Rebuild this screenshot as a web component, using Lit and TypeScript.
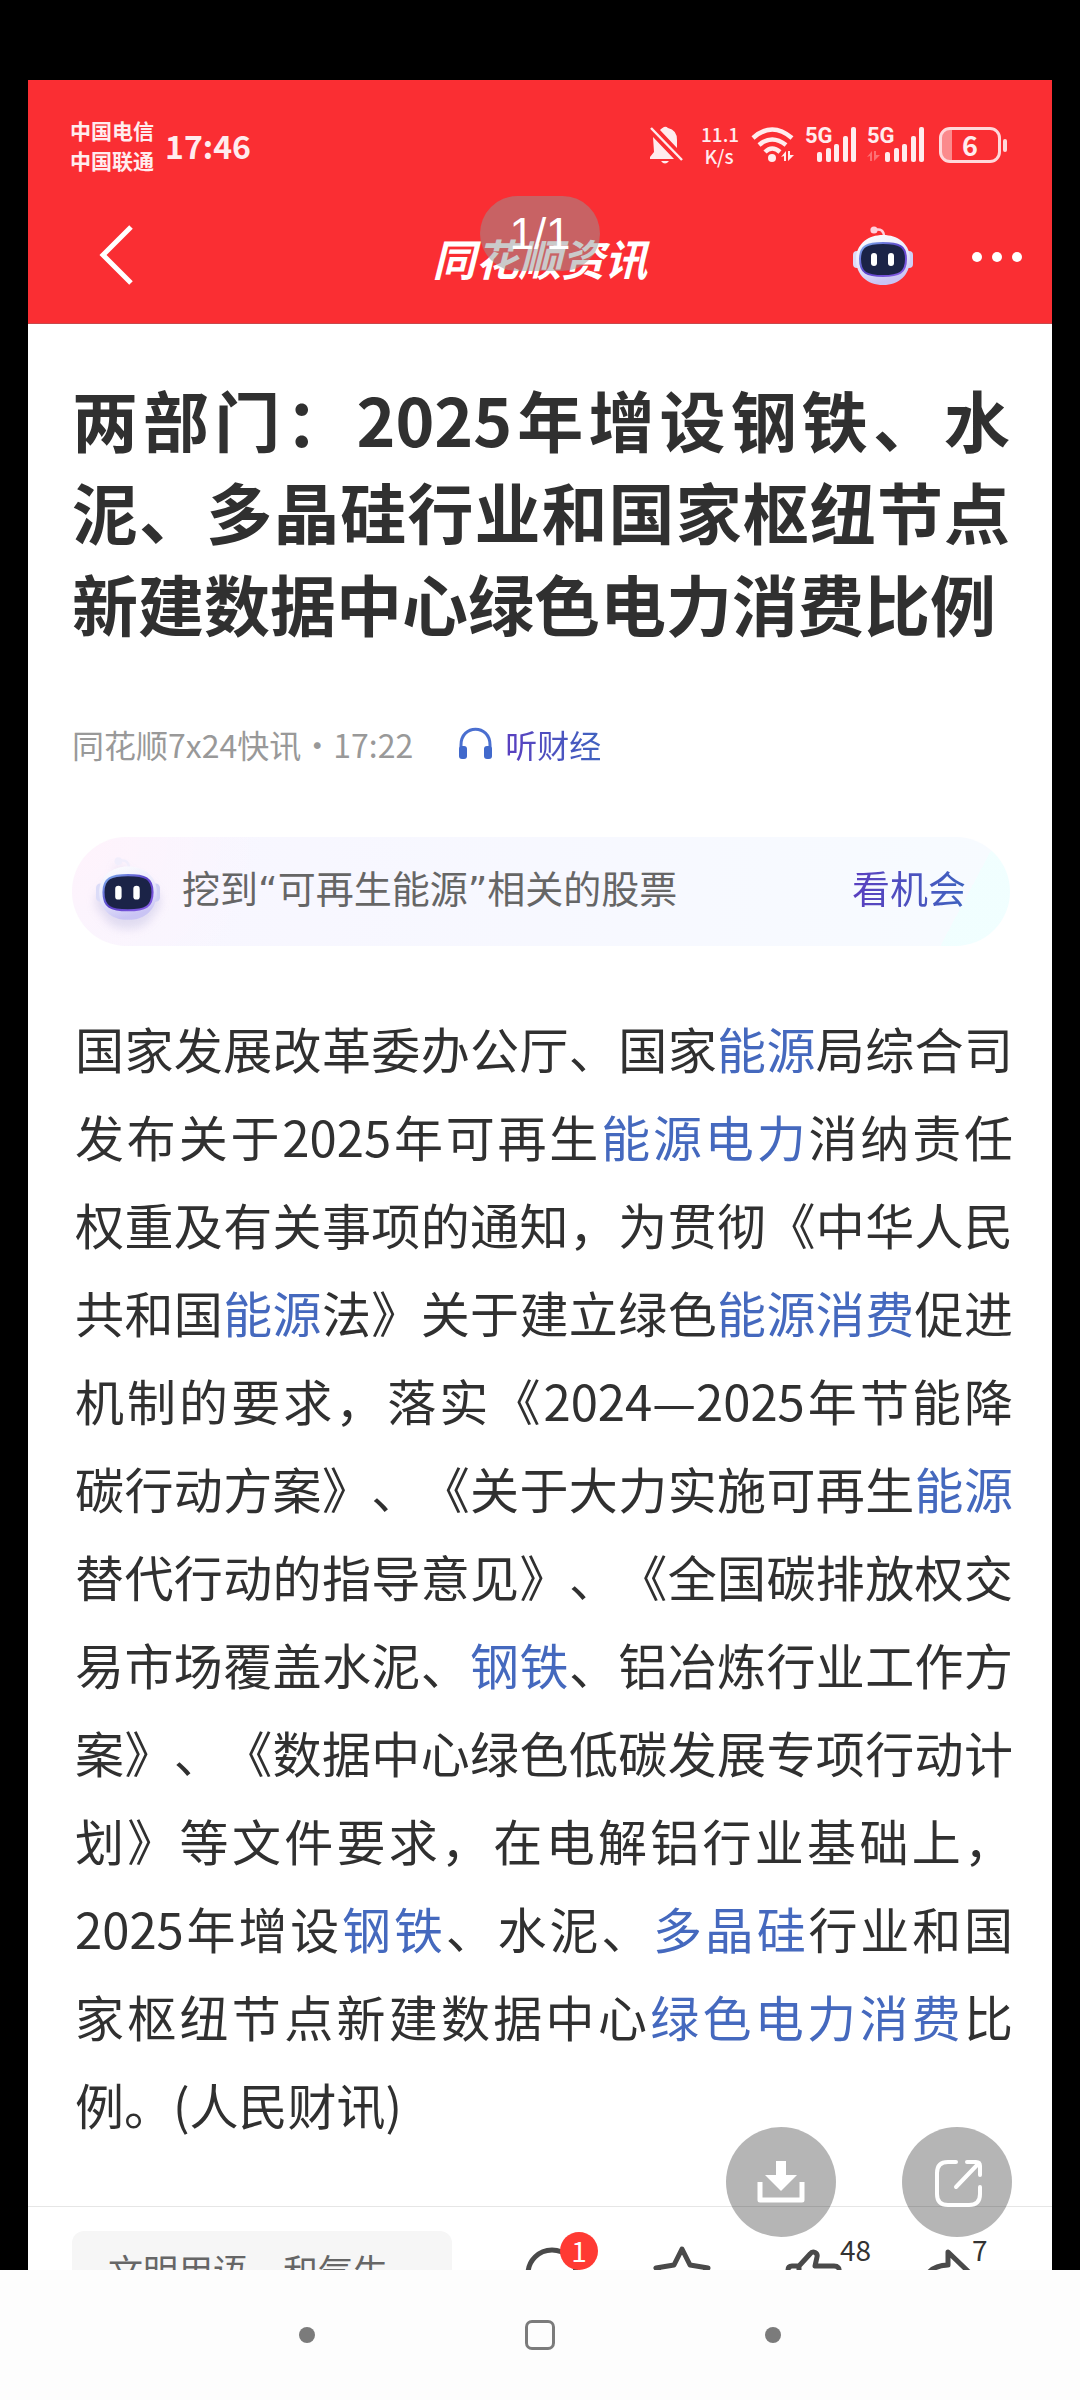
import { LitElement, html, css, svg, TemplateResult } from "lit";
import { customElement } from "lit/decorators.js";

type Piece = string | { term: string };

const HEADLINE = "两部门：2025年增设钢铁、水泥、多晶硅行业和国家枢纽节点新建数据中心绿色电力消费比例";

const BODY: Piece[] = [
  "国家发展改革委办公厅、国家", { term: "能源" }, "局综合司发布关于2025年可再生", { term: "能源电力" },
  "消纳责任权重及有关事项的通知，为贯彻《中华人民共和国", { term: "能源" }, "法》关于建立绿色", { term: "能源消费" },
  "促进机制的要求，落实《2024—2025年节能降碳行动方案》、《关于大力实施可再生", { term: "能源" },
  "替代行动的指导意见》、《全国碳排放权交易市场覆盖水泥、", { term: "钢铁" },
  "、铝冶炼行业工作方案》、《数据中心绿色低碳发展专项行动计划》等文件要求，在电解铝行业基础上，2025年增设",
  { term: "钢铁" }, "、水泥、", { term: "多晶硅" }, "行业和国家枢纽节点新建数据中心", { term: "绿色电力消费" }, "比例。(人民财讯)",
];

const robot = (id: string, antenna: string): TemplateResult => html`
  <svg class="robot" viewBox="0 2 62 60" aria-hidden="true">
    <defs>
      <linearGradient id="${id}-shell" x1="0" y1="0" x2="0.3" y2="1">
        <stop offset="0" stop-color="#ffffff"></stop>
        <stop offset="0.6" stop-color="#e6e6fb"></stop>
        <stop offset="1" stop-color="#c9c4f4"></stop>
      </linearGradient>
      <linearGradient id="${id}-rim" x1="0" y1="0" x2="1" y2="1">
        <stop offset="0" stop-color="#7fb4ee"></stop>
        <stop offset="0.5" stop-color="#5a3fc8"></stop>
        <stop offset="1" stop-color="#8a62e8"></stop>
      </linearGradient>
    </defs>
    <path d="M22 5C29 3 32 6 32 12" fill="none" stroke=${antenna} stroke-width="2.5"></path>
    <circle cx="22" cy="5" r="3.6" fill=${antenna}></circle>
    <rect x="1" y="26" width="9" height="17" rx="4" fill="#dcdcf8"></rect>
    <rect x="52" y="26" width="9" height="17" rx="4" fill="#cfd0f5"></rect>
    <path d="M31 10C47 10 58 20 58 34C58 50 47 60 31 60C15 60 4 50 4 34C4 20 15 10 31 10Z" fill="url(#${id}-shell)"></path>
    <path d="M31 18C47 18 54 21 54 34C54 48 47 51 31 51C15 51 8 48 8 34C8 21 15 18 31 18Z" fill="#1b2347" stroke="url(#${id}-rim)" stroke-width="2"></path>
    <rect x="19" y="28" width="6" height="13" rx="3" fill="#fff"></rect>
    <rect x="36" y="28" width="6" height="13" rx="3" fill="#fff"></rect>
  </svg>`;

const bars = (x: number) => svg`
  <rect x=${x} y="25" width="5" height="10" rx="2"></rect>
  <rect x=${x + 9} y="21" width="5" height="14" rx="2"></rect>
  <rect x=${x + 17} y="17" width="5" height="18" rx="2"></rect>
  <rect x=${x + 26} y="9" width="5" height="26" rx="2"></rect>
  <rect x=${x + 34} y="0" width="5" height="35" rx="2"></rect>`;

const arrows = svg`<path d="M0 6L5 0V10H3V5ZM7 0V10L13 4H9V0Z"></path>`;

@customElement("app-root")
export class AppRoot extends LitElement {
  static styles = css`
    :host {
      display: flex;
      flex-direction: column;
      height: 100vh;
      background: #000;
      color: #303030;
      font-family: "Noto Sans CJK SC", sans-serif;
      text-spacing-trim: space-all;
      text-autospace: no-autospace;
    }
    * { box-sizing: border-box; }
    button { border: 0; padding: 0; background: none; font: inherit; color: inherit; }
    a { color: inherit; text-decoration: none; }
    svg { display: block; overflow: visible; }
    h1, p { margin: 0; }

    .screen {
      position: relative;
      flex: 1 1 0;
      min-height: 0;
      margin: 80px 28px 0;
      overflow: hidden;
      background: #fff;
    }
    .top { background: #fa2e33; color: #fff; padding-bottom: 20px; border-bottom: 1px solid #c8484c; }
    .status {
      display: flex;
      align-items: center;
      height: 130px;
      padding: 0 45px 0 42px;
      color: #ffecee;
    }
    .carriers { font-size: 21px; line-height: 30px; font-weight: 700; }
    .clock { margin-left: 11px; font-size: 32px; line-height: 40px; font-weight: 700; }
    .signals { display: flex; align-items: center; margin-left: auto; }
    .bell { width: 34px; height: 38px; }
    .speed { margin-left: 18px; width: 36px; text-align: center; font-size: 19px; line-height: 22px; font-weight: 500; }
    .wifi { margin-left: 14px; width: 44px; height: 36px; }
    .cell { position: relative; margin-left: 10px; width: 52px; height: 36px; }
    .cell.second { width: 58px; }
    .gen { position: absolute; left: 0; top: -2px; font: 700 22px/22px "Liberation Sans Narrow", Roboto, sans-serif; }
    .cell svg, .wifi, .bell { fill: currentColor; }
    .battery { display: flex; align-items: center; gap: 2px; margin-left: 14px; }
    .case {
      width: 62px; height: 36px; border: 3px solid #ffd8da; border-radius: 11px;
      display: grid; place-items: center; font-size: 27px; line-height: 28px; font-weight: 700;
      background: linear-gradient(90deg, #fb8a8c 10px, transparent 10px);
    }
    .nub { width: 4px; height: 13px; border-radius: 3px; background: #ffd8da; }

    .bar { display: grid; grid-template-columns: 1fr auto 1fr; align-items: center; height: 93px; padding: 0 30px; }
    .back { width: 48px; height: 64px; margin-left: 34px; }
    .brand { font-size: 43px; line-height: 56px; font-weight: 700; font-style: italic; }
    .actions { display: flex; justify-content: flex-end; align-items: center; gap: 58px; }
    .bot, .bot .robot { width: 62px; height: 60px; }
    .more { display: flex; gap: 10px; padding: 16px 0; }
    .more i { width: 10px; height: 10px; border-radius: 50%; background: #fff; }

    .counter {
      position: absolute; top: 116px; left: 50%; transform: translateX(-50%);
      width: 120px; height: 75px; border-radius: 38px; background: rgba(150, 150, 150, 0.5);
      color: #fff; text-align: center; font: 400 44px/75px "Liberation Sans", sans-serif;
    }

    .article { padding: 48px 42px 58px 44px; }
    .headline { font-size: 66px; line-height: 92px; font-weight: 700; text-align: justify; }
    .meta { display: flex; align-items: center; margin-top: 72px; height: 48px; font-size: 32px; line-height: 48px; color: #999; }
    .listen { display: flex; align-items: center; gap: 11px; margin-left: 44px; }
    .listen svg { width: 37px; height: 34px; }
    .grad { background: linear-gradient(90deg, #5a3fc0, #3f63bf); background-clip: text; -webkit-background-clip: text; color: transparent; }
    .promo {
      display: flex; align-items: center; height: 109px; margin-top: 69px; padding: 0 44px 4px 22px; border-radius: 55px;
      font-family: "DejaVu Sans", "Noto Sans CJK SC", sans-serif; font-size: 38px; line-height: 56px; color: #666;
      background:
        linear-gradient(118deg, transparent 93%, rgba(240, 255, 255, 0.9) 93%),
        radial-gradient(circle at 0 0, #fff3fc, rgba(255, 243, 252, 0) 190px),
        linear-gradient(90deg, #f8f6ff, #f7f8ff 50%, #f7fbff);
    }
    .promo .robot { width: 68px; height: 64px; filter: drop-shadow(0 9px 5px rgba(120, 120, 190, 0.2)); }
    .promo .label { margin-left: 20px; }
    .promo .go { margin-left: auto; }
    .body { margin: 58px -3px 0 3px; font-size: 49px; line-height: 88px; text-align: justify; }
    .body a { color: #4569be; }

    .tools { display: flex; gap: 34px; padding: 24px 38px 24px 44px; border-top: 1px solid #e6e6e6; }
    .comment {
      flex: 1; min-width: 0; height: 78px; border: 0; border-radius: 12px; background: #f6f6f6;
      padding: 0 36px; font: 400 35px/78px "Noto Sans CJK SC", sans-serif; color: #666;
    }
    .comment::placeholder { color: #666; opacity: 1; }
    .acts { display: grid; grid-template-columns: repeat(4, 132px); }
    .act { position: relative; display: flex; justify-content: center; padding-top: 14px; }
    .act svg { width: 60px; height: 60px; fill: none; stroke: #4a4a4a; stroke-width: 5; stroke-linejoin: round; stroke-linecap: round; }
    .num { position: absolute; left: 90px; top: 4px; font-size: 28px; line-height: 28px; color: #333; }
    .badge {
      position: absolute; left: 74px; top: 1px; width: 38px; height: 38px; border-radius: 50%;
      background: #ff3a33; color: #fff; font-size: 28px; line-height: 36px; text-align: center;
    }

    .floats { position: absolute; right: 40px; bottom: 33px; display: flex; gap: 66px; }
    .fab { width: 110px; height: 110px; border-radius: 50%; background: rgba(0, 0, 0, 0.29); }
    .fab svg { width: 110px; height: 110px; }

    .system { display: flex; align-items: center; justify-content: center; gap: 210px; height: 130px; background: #fdfdfd; }
    .dot { width: 16px; height: 16px; border-radius: 50%; background: #7b7b7b; }
    .home { width: 30px; height: 30px; border: 3px solid #7b7b7b; border-radius: 7px; }
  `;

  render() {
    return html`
      <div class="screen">
        <header class="top">
          <div class="status">
            <div class="carriers"><div>中国电信</div><div>中国联通</div></div>
            <time class="clock">17:46</time>
            <div class="signals">
              <svg class="bell" viewBox="0 0 34 38" aria-hidden="true">
                <path d="M15 1Q17 0 19 2Q28 4 28 14V22L11 4Q13 2 15 1ZM4 11L25 33H1V31L5 26ZM12 35H20Q16 40 12 35Z"></path>
                <path d="M2 2L33 34" stroke="currentColor" stroke-width="2.5"></path>
              </svg>
              <div class="speed"><div>11.1</div><div>K/s</div></div>
              <svg class="wifi" viewBox="0 0 44 36" aria-hidden="true">
                <g fill="none" stroke="currentColor" stroke-width="4.5">
                  <path d="M2 11Q21 -6 41 11"></path><path d="M8 18Q21 7 35 18"></path><path d="M14 25Q21 18 29 25"></path>
                </g>
                <circle cx="21" cy="31" r="4"></circle>
                <g transform="translate(30 24)">${arrows}</g>
              </svg>
              <div class="cell">
                <span class="gen">5G</span>
                <svg width="52" height="36" viewBox="0 0 52 36" aria-hidden="true">${bars(12)}</svg>
              </div>
              <div class="cell second">
                <span class="gen">5G</span>
                <svg width="58" height="36" viewBox="0 0 58 36" aria-hidden="true">
                  ${bars(18)}<g transform="translate(0 24)" opacity="0.35">${arrows}</g>
                </svg>
              </div>
              <div class="battery"><div class="case">6</div><div class="nub"></div></div>
            </div>
          </div>
          <div class="bar">
            <button class="back" aria-label="返回">
              <svg viewBox="0 0 48 64" width="48" height="64"><path d="M39 2L11 30L39 58" fill="none" stroke="#fff" stroke-width="5"></path></svg>
            </button>
            <div class="brand">同花顺资讯</div>
            <div class="actions">
              <button class="bot" aria-label="智能助手">${robot("head", "#ffd0dc")}</button>
              <button class="more" aria-label="更多"><i></i><i></i><i></i></button>
            </div>
          </div>
        </header>

        <main class="article">
          <h1 class="headline">${HEADLINE}</h1>
          <div class="meta">
            <span>同花顺7x24快讯·17:22</span>
            <a class="listen" href="#listen">
              <svg viewBox="0 0 37 34" aria-hidden="true">
                <path d="M4 24V18C4 -3 33 -3 33 18V24" fill="none" stroke="#4a6fd0" stroke-width="3"></path>
                <rect x="2" y="19" width="8" height="13" rx="3" fill="#4169cc"></rect>
                <rect x="27" y="19" width="8" height="13" rx="3" fill="#4169cc"></rect>
              </svg>
              <span class="grad">听财经</span>
            </a>
          </div>
          <a class="promo" href="#stocks">
            ${robot("promo", "#f1eefc")}
            <span class="label">挖到“可再生能源”相关的股票</span>
            <span class="go grad">看机会</span>
          </a>
          <p class="body">${BODY.map((p) => (typeof p === "string" ? p : html`<a href="#term">${p.term}</a>`))}</p>
        </main>

        <footer class="tools">
          <input class="comment" type="text" aria-label="评论" placeholder="文明用语，和气生" />
          <div class="acts">
            <button class="act" aria-label="评论">
              <svg viewBox="0 0 60 60"><circle cx="30" cy="29" r="24"></circle></svg>
              <span class="badge">1</span>
            </button>
            <button class="act" aria-label="收藏">
              <svg viewBox="0 0 60 60"><path d="M28 4L36 20L54 23L42 37L45 55L28 47L11 55L14 37L2 23L20 20Z"></path></svg>
            </button>
            <button class="act" aria-label="点赞">
              <svg viewBox="0 0 60 60"><path d="M13 21V53M6 21H13L24 9C27 5 32 8 31 12L29 21H48Q54 21 53 27L49 48Q48 53 43 53H6Q2 53 2 49V25Q2 21 6 21Z"></path></svg>
              <span class="num">48</span>
            </button>
            <button class="act" aria-label="分享">
              <svg viewBox="0 0 60 60"><path d="M30 7L56 32L30 55V43Q12 42 3 53Q4 20 30 20Z"></path></svg>
              <span class="num">7</span>
            </button>
          </div>
        </footer>

        <div class="counter">1/1</div>
        <div class="floats">
          <button class="fab" aria-label="下载">
            <svg viewBox="0 0 110 110">
              <path d="M50 34H60V48H71L55 64L39 48H50Z" fill="#fff"></path>
              <path d="M34 55V73H76V55" fill="none" stroke="#fff" stroke-width="5" stroke-linejoin="round"></path>
            </svg>
          </button>
          <button class="fab" aria-label="打开">
            <svg viewBox="0 0 110 110" fill="none" stroke="#fff" stroke-width="4" stroke-linecap="round" stroke-linejoin="round">
              <path d="M54 35H46Q35 35 35 46V67Q35 78 46 78H67Q78 78 78 67V60"></path>
              <path d="M65 35H74Q78 35 78 39V48M77 36L54 60"></path>
            </svg>
          </button>
        </div>
      </div>
      <nav class="system" aria-label="系统导航">
        <button class="dot" aria-label="最近任务"></button>
        <button class="home" aria-label="主屏幕"></button>
        <button class="dot" aria-label="后退"></button>
      </nav>
    `;
  }
}
